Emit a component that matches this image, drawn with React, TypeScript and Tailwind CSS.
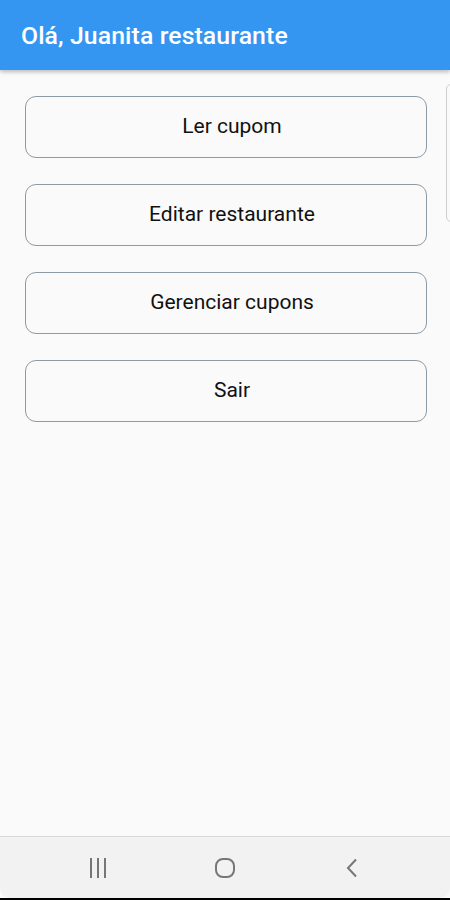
import React from "react";

const actions = ["Ler cupom", "Editar restaurante", "Gerenciar cupons", "Sair"];

export default function App() {
  return (
    <div className="w-[450px] h-[900px] flex flex-col bg-[#fafafa] font-['Roboto','Liberation_Sans',sans-serif] overflow-hidden">
      {/* barra superior */}
      <header className="h-[70px] shrink-0 bg-[#3596f2] flex items-center px-[21px] pt-[2px] shadow-[0_2px_4px_rgba(0,0,0,0.25)] z-10">
        <h1 className="text-white text-[24.8px] font-medium tracking-[0.1px]">Olá, Juanita restaurante</h1>
      </header>

      <main className="relative flex-1 flex flex-col gap-[26px] pl-[25px] pr-[23px] pt-[26px]">
        {actions.map((label) => (
          <button
            key={label}
            className="h-[62px] rounded-[11px] border border-[#8d9ba6] bg-[#fafafa] pl-[12px] text-[21px] text-[#111]"
          >
            {label}
          </button>
        ))}
        {/* barra de rolagem */}
        <div className="absolute right-[-6px] top-[14px] w-[10px] h-[138px] rounded-[5px] border border-[#cfcfcf]" />
      </main>

      {/* navegação do sistema */}
      <nav className="h-[62px] shrink-0 bg-[#f2f2f2] border-t border-[#d6d6d6] flex items-center pl-[88px] rounded-b-[10px]">
        <svg width="22" height="24" viewBox="0 0 22 24">
          <rect x="2" y="2" width="2" height="20" fill="#777" />
          <rect x="9" y="2" width="2" height="20" fill="#777" />
          <rect x="16" y="2" width="2" height="20" fill="#777" />
        </svg>
        <svg width="24" height="24" viewBox="0 0 24 24" className="ml-[103px]">
          <rect x="3" y="3" width="18" height="18" rx="7" fill="none" stroke="#777" strokeWidth="2" />
        </svg>
        <svg width="24" height="24" viewBox="0 0 24 24" className="ml-[102px]">
          <path d="M17 3.5 L9 12 L17 20.5" fill="none" stroke="#777" strokeWidth="2" />
        </svg>
      </nav>
      <div className="h-[2px] bg-black shrink-0" />
    </div>
  );
}
